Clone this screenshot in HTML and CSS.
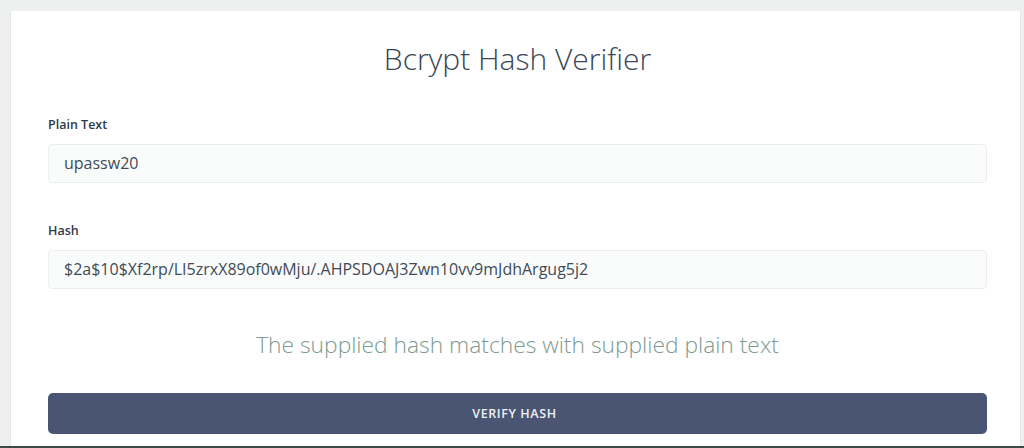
FILE: index.html
```html
<!DOCTYPE html>
<html>
<head>
<meta charset="utf-8">
<link rel="stylesheet" href="styles.css">
</head>
<body>
<div class="page">
  <div class="card">
    <h1 class="title">Bcrypt Hash Verifier</h1>
    <div class="field">
      <label class="label">Plain Text</label>
      <div class="input">upassw20</div>
    </div>
    <div class="field">
      <label class="label">Hash</label>
      <div class="input">$2a$10$Xf2rp/LI5zrxX89of0wMju/.AHPSDOAJ3Zwn10vv9mJdhArgug5j2</div>
    </div>
    <p class="message">The supplied hash matches with supplied plain text</p>
    <button class="btn">VERIFY HASH</button>
  </div>
</div>
<div class="bottom-line"></div>
</body>
</html>
```
FILE: styles.css
```css
* { box-sizing: border-box; }
html, body { margin: 0; padding: 0; }
body {
  background: #eef0ef;
  font-family: "Open Sans", sans-serif;
  height: 448px;
  overflow: hidden;
  display: flex;
  flex-direction: column;
}
.page {
  flex: 1;
  padding: 11px 3px 0 10px;
  display: flex;
}
.card {
  flex: 1;
  background: #fff;
  border-left: 1px solid #e4e7e6;
  border-right: 1px solid #e4e7e6;
  padding: 0 33px 0 37px;
  display: flex;
  flex-direction: column;
}
.title {
  margin: 28px 0 0;
  font-weight: 300;
  font-size: 30px;
  line-height: 40px;
  color: #3a4656;
  text-align: center;
}
.field { margin-top: 37px; }
.field + .field { margin-top: 39px; }
.label {
  display: block;
  font-size: 12.5px;
  font-weight: 600;
  color: #2f3a48;
  line-height: 18px;
}
.input {
  margin-top: 10px;
  height: 39px;
  border: 1px solid #eceeee;
  background: #fafbfb;
  border-radius: 4px;
  padding: 0 15px;
  font-size: 16px;
  line-height: 37px;
  color: #3f4b58;
}
.message {
  margin: 38px 0 0;
  text-align: center;
  font-weight: 300;
  font-size: 22.8px;
  line-height: 36px;
  color: #7d9a90;
}
.btn {
  margin-top: 30px;
  height: 41px;
  width: 100%;
  border: none;
  border-radius: 5px;
  background: #4a5573;
  color: #eef1f3;
  font-family: "Open Sans", sans-serif;
  font-weight: 600;
  font-size: 12.5px;
  letter-spacing: 0.6px;
  padding: 0 6px 0 0;
}
.bottom-line {
  height: 2px;
  background: #3e4a47;
}
```
